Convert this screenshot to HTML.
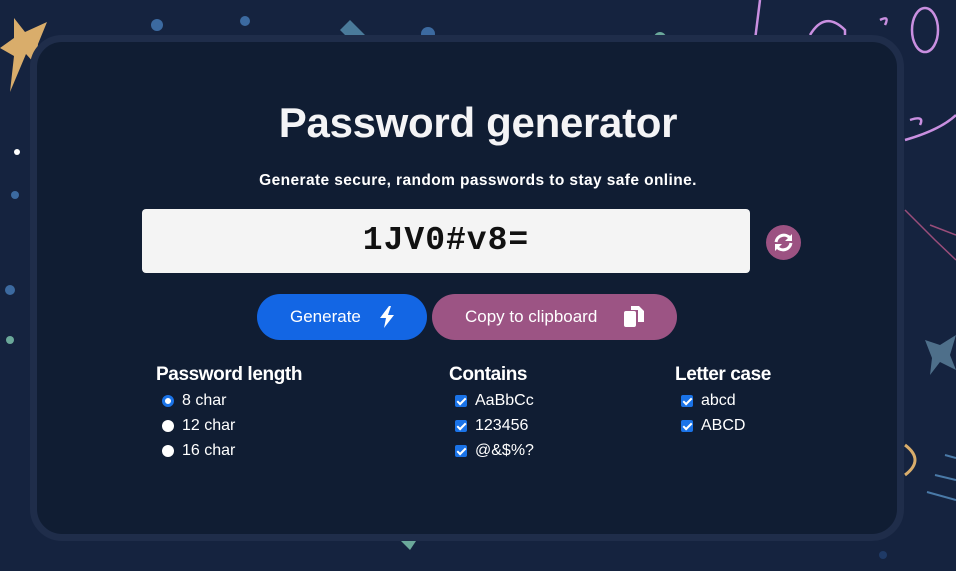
<!DOCTYPE html>
<html><head><meta charset="utf-8"><style>
*{margin:0;padding:0;box-sizing:border-box}
body{width:956px;height:571px;overflow:hidden;background:#15233f;font-family:"Liberation Sans",sans-serif;color:#fff;position:relative}
.card{position:absolute;left:30px;top:35px;width:874px;height:506px;border:7px solid #1f2d4a;border-radius:32px;background:#101d33}
.abs{position:absolute}
h1{position:absolute;left:0;width:100%;top:99px;text-align:center;font-size:42px;font-weight:bold;letter-spacing:-0.3px;color:#f4f4f6}
.sub{position:absolute;left:0;width:100%;top:172px;text-align:center;font-size:15.5px;letter-spacing:0.4px;font-weight:bold}
.pw{position:absolute;left:142px;top:209px;width:608px;height:64px;background:#f4f4f4;border-radius:4px;color:#111;font-family:"Liberation Mono",monospace;font-size:33px;font-weight:bold;letter-spacing:1px;text-align:center;line-height:64px}
.ref{position:absolute;left:766px;top:225px;width:35px;height:35px;border-radius:50%;background:#9c5282}
.btn{position:absolute;top:294px;height:46px;border-radius:23px;font-size:17px;line-height:46px;color:#fff}
.gen{left:257px;width:170px;background:#1366e4;padding-left:33px}
.copy{left:432px;width:245px;background:#9c5484;padding-left:33px}
.col{position:absolute;top:364px}
.col h3{font-size:19px;font-weight:bold;letter-spacing:-0.4px;margin-bottom:2px}
.it{height:25px;font-size:16px;display:flex;align-items:center}
.cb{width:12px;height:12px;background:#1a73e8;border-radius:2px;margin:0 8px 0 6px;position:relative}
.cb:after{content:"";position:absolute;left:4px;top:1px;width:3px;height:7px;border:solid #fff;border-width:0 2px 2px 0;transform:rotate(45deg)}
.rd{width:12px;height:12px;border-radius:50%;background:#fff;margin:0 8px 0 6px}
.rd.on{border:3px solid #1a73e8;background:#fff}
</style></head><body>
<svg class="abs" style="left:0;top:0" width="956" height="571">
<polygon points="14,18 25,32 47,22 38,44 36,65 26,54 10,92 14,56 0,48 14,38" fill="#d9ad6b"/>
<circle cx="157" cy="25" r="6" fill="#3c6aa0"/><circle cx="245" cy="21" r="5" fill="#3c6aa0"/>
<circle cx="428" cy="34" r="7" fill="#3c6aa0"/><circle cx="660" cy="38" r="6" fill="#6aa89a"/>
<circle cx="17" cy="152" r="3" fill="#fff"/><circle cx="15" cy="195" r="4" fill="#3c6aa0"/>
<circle cx="10" cy="290" r="5" fill="#3c6aa0"/><circle cx="10" cy="340" r="4" fill="#6aa89a"/>
<polygon points="350,20 365,35 355,45 340,30" fill="#4a7a9a"/>
<polygon points="925,340 940,345 956,335 950,355 956,370 940,362 930,375 932,358" fill="#4e6f8a"/>
<polygon points="395,535 420,535 410,550" fill="#6aa89a"/>
<circle cx="883" cy="555" r="4" fill="#1f3a66"/>
<g fill="none" stroke="#c98fe0" stroke-width="2.5"><path d="M760 0 L755 40"/><path d="M810 35 Q825 10 845 30 L845 40"/><path d="M880 20 Q890 15 885 25"/><ellipse cx="925" cy="30" rx="13" ry="22"/><path d="M905 140 Q940 130 956 115"/><path d="M910 120 Q925 115 920 125"/></g>
<g fill="none" stroke="#9a4d7a" stroke-width="1.5"><path d="M905 210 L935 240 L956 260"/><path d="M930 225 L956 235"/></g>
<path d="M905 445 Q925 460 905 475" fill="none" stroke="#d9ad6b" stroke-width="3"/>
<g stroke="#4a7aa8" stroke-width="2"><path d="M945 455 L956 458"/><path d="M935 475 L956 480"/><path d="M927 492 L956 500"/></g>
</svg>
<div class="card"></div>
<h1>Password generator</h1>
<div class="sub">Generate secure, random passwords to stay safe online.</div>
<div class="pw">1JV0#v8=</div>
<div class="ref"><svg width="35" height="35" viewBox="0 0 35 35"><g fill="none" stroke="#fff" stroke-width="3"><path d="M10 17 A8 8 0 0 1 24 13"/><path d="M25 18 A8 8 0 0 1 11 22"/></g><path d="M26 9 L26 16 L19 16Z M9 26 L9 19 L16 19Z" fill="#fff"/></svg></div>
<div class="btn gen">Generate <svg style="position:absolute;left:121px;top:12px" width="18" height="22" viewBox="0 0 18 22"><path d="M11 0 L2 12 L8 12 L6 22 L16 9 L10 9 L13 0Z" fill="#fff"/></svg></div>
<div class="btn copy">Copy to clipboard <svg style="position:absolute;left:192px;top:12px" width="20" height="22" viewBox="0 0 20 22"><rect x="0" y="5" width="12" height="16" rx="2" fill="#fff"/><path d="M7 0 H15 L20 5 V16 H14 V4 H7Z" fill="#fff"/></svg></div>
<div class="col" style="left:156px"><h3>Password length</h3>
<div class="it"><span class="rd on"></span>8 char</div><div class="it"><span class="rd"></span>12 char</div><div class="it"><span class="rd"></span>16 char</div></div>
<div class="col" style="left:449px"><h3>Contains</h3>
<div class="it"><span class="cb"></span>AaBbCc</div><div class="it"><span class="cb"></span>123456</div><div class="it"><span class="cb"></span>@&amp;$%?</div></div>
<div class="col" style="left:675px"><h3>Letter case</h3>
<div class="it"><span class="cb"></span>abcd</div><div class="it"><span class="cb"></span>ABCD</div></div>
</body></html>
